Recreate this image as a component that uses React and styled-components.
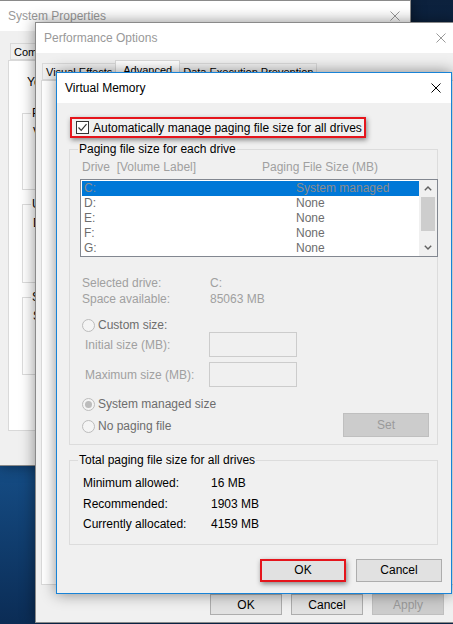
import React from "react";
import styled, { createGlobalStyle } from "styled-components";

const GlobalStyle = createGlobalStyle`
  html, body {
    margin: 0;
    padding: 0;
  }
  body {
    font-family: "Segoe UI", "Liberation Sans", Arial, sans-serif;
    font-size: 12px;
    color: #000;
  }
  * {
    box-sizing: border-box;
  }
`;

const drives = [
  { name: "C:", size: "System managed" },
  { name: "D:", size: "None" },
  { name: "E:", size: "None" },
  { name: "F:", size: "None" },
  { name: "G:", size: "None" },
];

const totals = [
  { label: "Minimum allowed:", value: "16 MB" },
  { label: "Recommended:", value: "1903 MB" },
  { label: "Currently allocated:", value: "4159 MB" },
];

const CloseIcon = ({ color }) => (
  <svg width="10" height="10" viewBox="0 0 10 10">
    <path d="M0.5 0.5L9.5 9.5M9.5 0.5L0.5 9.5" stroke={color} strokeWidth="1" fill="none" />
  </svg>
);

const Chevron = ({ up }) => (
  <svg width="8" height="5" viewBox="0 0 8 5">
    <path
      d={up ? "M0.8 4.2L4 1L7.2 4.2" : "M0.8 0.8L4 4L7.2 0.8"}
      stroke="#606060"
      strokeWidth="1.4"
      fill="none"
    />
  </svg>
);

const CheckMark = () => (
  <svg width="11" height="11" viewBox="0 0 11 11">
    <path d="M1.5 5.5L4.2 8.3L9.5 2.2" stroke="#333" strokeWidth="1.2" fill="none" />
  </svg>
);

// Generic window frame used on the desktop
const Window = ({ title, active, children, ...pos }) => (
  <StyledWindow $active={active} {...pos}>
    <StyledTitleBar $active={active}>
      <span>{title}</span>
      <CloseIcon color={active ? "#000" : "#999"} />
    </StyledTitleBar>
    {children}
  </StyledWindow>
);

const Radio = ({ checked, children }) => (
  <StyledRadioRow>
    <StyledRadioCircle>{checked && <StyledRadioDot />}</StyledRadioCircle>
    {children}
  </StyledRadioRow>
);

const App = () => {
  return (
    <>
      <GlobalStyle />
      <StyledDesktop>
        {/* Start System Properties */}
        <Window title="System Properties" $z={1} $left={-1} $top={0} $width={412} $height={466}>
          <StyledSysBody>
            <StyledTabStrip $offset={3}>
              <StyledTab>Computer Name</StyledTab>
              <StyledTab>Hardware</StyledTab>
              <StyledTab $active>Advanced</StyledTab>
              <StyledTab>System Protection</StyledTab>
              <StyledTab>Remote</StyledTab>
            </StyledTabStrip>
            <StyledSysPanel>
              <StyledNote>You must be logged on as an Administrator.</StyledNote>
              <StyledSysGroup $height={85}>
                <legend>Performance</legend>
                <StyledSysText>Visual effects</StyledSysText>
              </StyledSysGroup>
              <StyledSysGroup $height={87}>
                <legend>User Profiles</legend>
                <StyledSysText>Desktop settings</StyledSysText>
              </StyledSysGroup>
              <StyledSysGroup $height={86}>
                <legend>Startup and Recovery</legend>
                <StyledSysText>System startup</StyledSysText>
              </StyledSysGroup>
            </StyledSysPanel>
          </StyledSysBody>
        </Window>
        {/* End System Properties */}

        {/* Start Performance Options */}
        <Window title="Performance Options" $z={2} $left={35} $top={22} $width={422} $height={601}>
          <StyledPerfBody>
            <StyledTabStrip $offset={2}>
              <StyledTab>Visual Effects</StyledTab>
              <StyledTab $active $pad={7}>
                Advanced
              </StyledTab>
              <StyledTab>Data Execution Prevention</StyledTab>
            </StyledTabStrip>
            <StyledPerfPanel />
            <StyledButtonRow $gap={9} $right={12} $top={9}>
              <StyledButton $w={72} $h={21}>OK</StyledButton>
              <StyledButton $w={72} $h={21}>Cancel</StyledButton>
              <StyledButton $w={72} $h={21} disabled>
                Apply
              </StyledButton>
            </StyledButtonRow>
          </StyledPerfBody>
        </Window>
        {/* End Performance Options */}

        {/* Start Virtual Memory */}
        <Window title="Virtual Memory" active $z={3} $left={56} $top={72} $width={396} $height={522}>
          <StyledVmBody>
            <StyledCheckRow>
              <StyledCheckBox>
                <CheckMark />
              </StyledCheckBox>
              Automatically manage paging file size for all drives
            </StyledCheckRow>

            <StyledGroup $top={3} $padRight={0} $padBottom={7}>
              <legend>Paging file size for each drive</legend>
              <StyledHeaderRow>
                <span>Drive&nbsp; [Volume Label]</span>
                <span>Paging File Size (MB)</span>
              </StyledHeaderRow>

              <StyledListBox>
                <StyledListRows>
                  {drives.map((d, i) => (
                    <StyledListRow key={d.name} $selected={i === 0}>
                      <span>{d.name}</span>
                      <span>{d.size}</span>
                    </StyledListRow>
                  ))}
                </StyledListRows>
                <StyledScrollbar>
                  <StyledArrow>
                    <Chevron up />
                  </StyledArrow>
                  <StyledTrack>
                    <StyledThumb />
                  </StyledTrack>
                  <StyledArrow>
                    <Chevron />
                  </StyledArrow>
                </StyledScrollbar>
              </StyledListBox>

              <StyledInfoGrid>
                <span>Selected drive:</span>
                <span>C:</span>
                <span>Space available:</span>
                <span>85063 MB</span>
              </StyledInfoGrid>

              <StyledCustomRadio>
                <Radio>Custom size:</Radio>
              </StyledCustomRadio>
              <StyledSizeRow>
                <span>Initial size (MB):</span>
                <StyledSizeInput />
              </StyledSizeRow>
              <StyledSizeRow>
                <span>Maximum size (MB):</span>
                <StyledSizeInput />
              </StyledSizeRow>

              <StyledModeRow>
                <StyledRadioColumn>
                  <Radio checked>System managed size</Radio>
                  <Radio>No paging file</Radio>
                </StyledRadioColumn>
                <StyledButton $w={86} $h={24} disabled>
                  Set
                </StyledButton>
              </StyledModeRow>
            </StyledGroup>

            <StyledGroup $top={7} $padRight={12} $padBottom={9}>
              <legend>Total paging file size for all drives</legend>
              <StyledTotals>
                {totals.map((t) => (
                  <React.Fragment key={t.label}>
                    <span>{t.label}</span>
                    <span>{t.value}</span>
                  </React.Fragment>
                ))}
              </StyledTotals>
            </StyledGroup>

            <StyledButtonRow $gap={10} $right={9} $top={14}>
              <StyledButton $w={86} $h={23} $highlight>
                OK
              </StyledButton>
              <StyledButton $w={86} $h={23}>
                Cancel
              </StyledButton>
            </StyledButtonRow>
          </StyledVmBody>
        </Window>
        {/* End Virtual Memory */}
      </StyledDesktop>
    </>
  );
};

export default App;

// ========= Start styled-components ==========
const StyledDesktop = styled.div`
  position: relative;
  width: 453px;
  height: 624px;
  overflow: hidden;
  background: linear-gradient(180deg, #0c213d 0%, #10335d 45%, #16508a 72%, #0b2c55 100%);
`;

const StyledWindow = styled.section(
  ({ $left, $top, $width, $height, $active, $z }) => `
    position: absolute;
    z-index: ${$z};
    left: ${$left}px;
    top: ${$top}px;
    width: ${$width}px;
    height: ${$height}px;
    display: flex;
    flex-direction: column;
    background: #f0f0f0;
    border: 1px solid ${$active ? "#1883d7" : "#8a8a8a"};
    box-shadow: 0 0 14px rgba(0, 0, 0, 0.45);
  `
);

const StyledTitleBar = styled.header(
  ({ $active }) => `
    flex: none;
    height: 30px;
    display: flex;
    align-items: center;
    justify-content: space-between;
    padding: 0 10px 0 8px;
    background: #fff;
    color: ${$active ? "#000" : "#999"};
    font-size: 12px;
    white-space: nowrap;
  `
);

const StyledTabStrip = styled.div(
  ({ $offset = 1 }) => `
    display: flex;
    align-items: flex-end;
    height: 20px;
    padding-left: ${$offset}px;
    position: relative;
    z-index: 1;
  `
);

const StyledTab = styled.div(
  ({ $active, $pad = 5 }) => `
    height: ${$active ? 21 : 17}px;
    margin-bottom: ${$active ? -1 : 0}px;
    padding: ${$active ? `2px ${$pad}px 0` : "1px 3px 0"};
    background: ${$active ? "#fff" : "#f0f0f0"};
    border: 1px solid #d9d9d9;
    border-bottom: ${$active ? "none" : "1px solid #d9d9d9"};
    margin-left: -1px;
    font-size: 11px;
    white-space: nowrap;
    line-height: 15px;
  `
);

// ---- System Properties ----
const StyledSysBody = styled.div`
  flex: 1;
  display: flex;
  flex-direction: column;
  padding: 9px 7px 0 8px;
  min-height: 0;
`;

const StyledSysPanel = styled.div`
  height: 371px;
  background: #fff;
  border: 1px solid #d9d9d9;
  padding: 13px 0 0 13px;
  display: flex;
  flex-direction: column;
  gap: 6px;
`;

const StyledNote = styled.div`
  padding-left: 5px;
  line-height: 16px;
  white-space: nowrap;
  margin-bottom: 9px;
`;

const StyledSysGroup = styled.fieldset(
  ({ $height }) => `
    margin: 0;
    height: ${$height}px;
    width: 372px;
    border: 1px solid #dcdcdc;
    padding: 3px 8px 0;

    legend {
      padding: 0 1px;
      line-height: 16px;
    }
  `
);

const StyledSysText = styled.div`
  padding-left: 2px;
  line-height: 16px;
  white-space: nowrap;
`;

// ---- Performance Options ----
const StyledPerfBody = styled.div`
  flex: 1;
  display: flex;
  flex-direction: column;
  padding: 7px 0 0 5px;
`;

const StyledPerfPanel = styled.div`
  height: 505px;
  background: #fff;
  border: 1px solid #d9d9d9;
`;

// ---- Virtual Memory ----
const StyledVmBody = styled.div`
  flex: 1;
  display: flex;
  flex-direction: column;
  padding: 14px 0 0 0;
`;

const StyledCheckRow = styled.div`
  align-self: flex-start;
  margin-left: 13px;
  width: 296px;
  height: 21px;
  display: flex;
  align-items: center;
  gap: 4px;
  padding-left: 4px;
  border: 2px solid #e5151c;
  box-shadow: 1px 2px 5px rgba(0, 0, 0, 0.45);
  white-space: nowrap;
`;

const StyledCheckBox = styled.span`
  width: 13px;
  height: 13px;
  flex: none;
  display: flex;
  align-items: center;
  justify-content: center;
  border: 1px solid #333;
  background: #fff;
`;

const StyledGroup = styled.fieldset(
  ({ $top, $padRight, $padBottom }) => `
    margin: ${$top}px 13px 0 12px;
    padding: 3px ${$padRight}px ${$padBottom}px 10px;
    border: 1px solid #dcdcdc;
    min-width: 0;

    legend {
      margin-left: -2px;
      padding: 0 1px;
      line-height: 16px;
    }
  `
);

const StyledHeaderRow = styled.div`
  display: grid;
  grid-template-columns: 180px 1fr;
  padding-left: 2px;
  line-height: 14px;
  color: #a0a0a0;
  white-space: nowrap;
`;

const StyledListBox = styled.div`
  margin: 5px -1px 0 0;
  height: 78px;
  display: flex;
  padding: 1px 0 1px 1px;
  background: #fff;
  border: 1px solid #828790;
`;

const StyledListRows = styled.div`
  flex: 1;
  display: flex;
  flex-direction: column;
`;

const StyledListRow = styled.div(
  ({ $selected }) => `
    height: 15px;
    display: grid;
    grid-template-columns: 212px 1fr;
    padding-left: 2px;
    line-height: 15px;
    color: ${$selected ? "#8c8c8c" : "#6d6d6d"};
    background: ${$selected ? "#0078d7" : "transparent"};
    white-space: nowrap;
  `
);

const StyledScrollbar = styled.div`
  width: 18px;
  display: flex;
  flex-direction: column;
  background: #f0f0f0;
  margin-top: -1px;
  margin-bottom: -1px;
`;

const StyledArrow = styled.div`
  height: 17px;
  display: flex;
  align-items: center;
  justify-content: center;
`;

const StyledTrack = styled.div`
  flex: 1;
  padding: 0 2px;
`;

const StyledThumb = styled.div`
  height: 34px;
  background: #cdcdcd;
`;

const StyledInfoGrid = styled.div`
  margin-top: 18px;
  display: grid;
  grid-template-columns: 128px 1fr;
  padding-left: 2px;
  line-height: 16px;
  color: #a0a0a0;
  white-space: nowrap;
`;

const StyledCustomRadio = styled.div`
  margin-top: 10px;
  height: 15px;
  padding-left: 2px;
`;

const StyledRadioRow = styled.div`
  display: flex;
  align-items: center;
  gap: 3px;
  height: 16px;
  color: #6d6d6d;
  white-space: nowrap;
`;

const StyledRadioCircle = styled.span`
  width: 13px;
  height: 13px;
  flex: none;
  border-radius: 50%;
  border: 1px solid #bcbcbc;
  background: #f4f4f4;
  display: flex;
  align-items: center;
  justify-content: center;
`;

const StyledRadioDot = styled.span`
  width: 7px;
  height: 7px;
  border-radius: 50%;
  background: #bcbcbc;
`;

const StyledSizeRow = styled.div`
  display: flex;
  align-items: center;
  height: 25px;
  margin-bottom: 5px;
  padding-left: 5px;
  color: #a0a0a0;
  white-space: nowrap;

  span {
    width: 124px;
  }
`;

const StyledSizeInput = styled.div`
  width: 88px;
  height: 25px;
  border: 1px solid #cccccc;
  background: #f0f0f0;
`;

const StyledModeRow = styled.div`
  margin-top: 9px;
  height: 41px;
  display: flex;
  justify-content: space-between;
  align-items: flex-end;
  padding: 0 8px 0 2px;
`;

const StyledRadioColumn = styled.div`
  align-self: flex-start;
  display: flex;
  flex-direction: column;
  gap: 6px;
`;

const StyledTotals = styled.div`
  margin-top: 2px;
  display: grid;
  grid-template-columns: 128px 1fr;
  padding-left: 3px;
  line-height: 20.5px;
  white-space: nowrap;
`;

const StyledButtonRow = styled.div(
  ({ $gap, $right, $top }) => `
    display: flex;
    justify-content: flex-end;
    gap: ${$gap}px;
    margin-top: ${$top}px;
    padding-right: ${$right}px;
  `
);

const StyledButton = styled.button(
  ({ $w, $h, $highlight }) => `
    width: ${$w}px;
    height: ${$h}px;
    padding: 0;
    font: inherit;
    font-size: 12px;
    color: #000;
    background: #e1e1e1;
    border: ${$highlight ? "2px solid #e5151c" : "1px solid #adadad"};
    box-shadow: ${$highlight ? "1px 2px 5px rgba(0, 0, 0, 0.45)" : "none"};

    &:disabled {
      color: #9a9a9a;
      background: #cccccc;
      border-color: #bfbfbf;
    }
  `
);
// ========= End styled-components ==========
